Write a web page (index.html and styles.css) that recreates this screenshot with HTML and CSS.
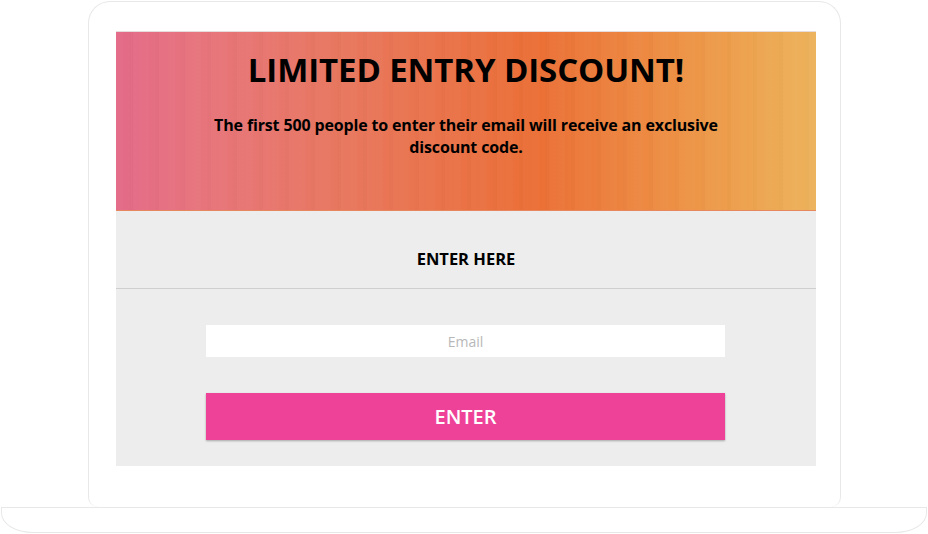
FILE: index.html
```html
<!DOCTYPE html>
<html>
<head>
<meta charset="utf-8">
<link rel="stylesheet" href="styles.css">
</head>
<body>
<div class="laptop">
  <div class="screen">
    <div class="page">
      <div class="banner">
        <h1 class="title">LIMITED ENTRY DISCOUNT!</h1>
        <p class="lead">The first 500 people to enter their email will receive an exclusive discount code.</p>
      </div>
      <div class="section-head">ENTER HERE</div>
      <form class="form">
        <input class="email" type="text" placeholder="Email">
        <button class="btn" type="button">ENTER</button>
      </form>
    </div>
  </div>
  <div class="base"></div>
</div>
</body>
</html>
```
FILE: styles.css
```css
html, body {
  margin: 0;
  padding: 0;
  background: #fff;
}
body {
  width: 928px;
  height: 534px;
  overflow: hidden;
  font-family: "Open Sans", "Liberation Sans", sans-serif;
}
.laptop {
  display: flex;
  flex-direction: column;
  align-items: flex-start;
  padding-top: 1px;
}
.screen {
  margin-left: 88px;
  width: 753px;
  height: 506px;
  border: 1px solid #e8e8e8;
  border-bottom: none;
  border-radius: 22px 22px 10px 10px;
  padding: 29px 25px 0 27px;
  box-sizing: border-box;
}
.page {
  width: 700px;
  height: 435px;
  background: #ededed;
  display: flex;
  flex-direction: column;
}
.banner {
  height: 180px;
  flex: none;
  box-sizing: border-box;
  border-top: 1px solid #e6dcdc;
  border-bottom: 1px solid #e7875f;
  background:
    repeating-linear-gradient(90deg, rgba(255,255,255,0.018) 0 7px, rgba(255,255,255,0) 7px 13px, rgba(0,0,0,0.01) 13px 17px, rgba(255,255,255,0.015) 17px 26px),
    linear-gradient(90deg, #e36a88 0%, #e7747c 12%, #e8775f 32%, #eb6f36 60%, #ed8d43 78%, #eda24e 90%, #edb35c 100%);
  display: flex;
  flex-direction: column;
  align-items: center;
  text-align: center;
  color: #000;
}
.title {
  margin: 19px 0 0;
  font-size: 33px;
  font-weight: 700;
  line-height: 38px;
  letter-spacing: -0.1px;
}
.lead {
  margin: 25px 0 0;
  width: 530px;
  font-size: 16px;
  font-weight: 700;
  line-height: 22px;
  letter-spacing: -0.15px;
}
.section-head {
  height: 78px;
  flex: none;
  box-sizing: border-box;
  padding-top: 18px;
  border-bottom: 1px solid #cfcfcf;
  display: flex;
  align-items: center;
  justify-content: center;
  font-size: 16.5px;
  font-weight: 700;
  color: #000;
}
.form {
  display: flex;
  flex-direction: column;
  align-items: flex-start;
  gap: 36px;
  padding: 36px 0 0 90px;
  margin: 0;
}
.email {
  width: 519px;
  height: 32px;
  box-sizing: border-box;
  border: none;
  background: #fff;
  text-align: center;
  font-family: inherit;
  font-size: 14px;
  color: #333;
  outline: none;
}
.email::placeholder {
  color: #b8b8b8;
}
.btn {
  width: 519px;
  height: 47px;
  border: none;
  background: #ee4299;
  color: #fff;
  font-family: inherit;
  font-size: 20px;
  font-weight: 600;
  box-shadow: 0 1px 2px rgba(0,0,0,0.3);
}
.base {
  margin-left: 1px;
  width: 926px;
  height: 26px;
  box-sizing: border-box;
  border: 1px solid #e8e8e8;
  border-radius: 0 0 32px 32px / 0 0 20px 20px;
}
```
